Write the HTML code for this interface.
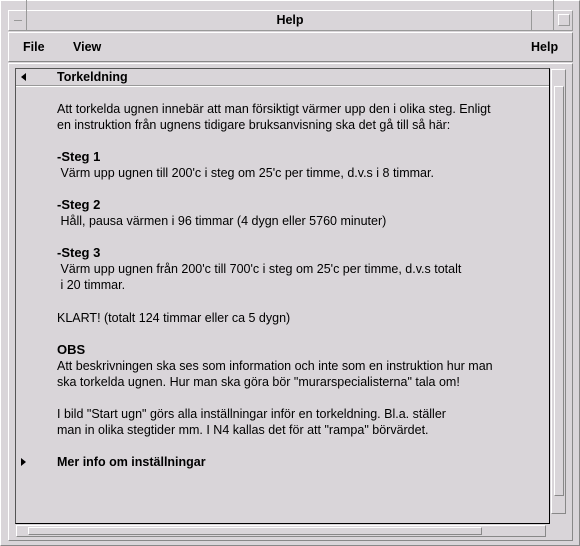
<!DOCTYPE html>
<html><head><meta charset="utf-8"><style>
*{margin:0;padding:0;box-sizing:border-box}
body{width:580px;height:546px;background:#d9d5d9;font-family:"Liberation Sans",Arial,sans-serif;font-size:12px;color:#000;position:relative;overflow:hidden}
.a{position:absolute}
.t{position:absolute;left:57px;white-space:pre;line-height:14px;font-size:12.5px}
.h{font-size:13px;font-weight:bold}
b{font-weight:bold}
</style></head><body>
<div class="a" style="left:0;top:0;width:580px;height:546px;border:1px solid #fff;border-right-color:#888;border-bottom-color:#888"></div>
<div class="a" style="left:8px;top:10px;width:565px;height:21px;border:1px solid #fff;border-right-color:#999;border-bottom-color:#999"></div>
<div class="a" style="left:26px;top:0;width:1px;height:10px;background:#999"></div>
<div class="a" style="left:553px;top:0;width:1px;height:10px;background:#999"></div>
<div class="a" style="left:26px;top:10px;width:1px;height:21px;background:#999"></div>
<div class="a" style="left:531px;top:10px;width:1px;height:21px;background:#999"></div>
<div class="a" style="left:553px;top:10px;width:1px;height:21px;background:#999"></div>
<div class="a" style="left:14px;top:20px;width:8px;height:1px;background:#999"></div>
<div class="a" style="left:558px;top:14px;width:12px;height:12px;border:1px solid #999;border-top-color:#fff;border-left-color:#fff"></div>
<div class="a" style="left:0;top:13px;width:580px;text-align:center;font-weight:bold;font-size:12.5px">Help</div>
<div class="a" style="left:8px;top:32px;width:565px;height:30px;border:1px solid #fff;border-right-color:#888;border-bottom-color:#888"></div>
<div class="a" style="left:23px;top:40px;font-weight:bold;font-size:12.5px">File</div>
<div class="a" style="left:73px;top:40px;font-weight:bold;font-size:12.5px">View</div>
<div class="a" style="left:531px;top:40px;font-weight:bold;font-size:12.5px">Help</div>
<div class="a" style="left:8px;top:63px;width:565px;height:478px;border:1px solid #fff;border-right-color:#888;border-bottom-color:#888"></div>
<div class="a" style="left:15px;top:68px;width:535px;height:456px;border:1px solid #000;border-top-color:#555;border-left-color:#555"></div>
<div class="a" style="left:16px;top:85px;width:533px;height:1px;background:#999"></div>
<div class="a" style="left:16px;top:86px;width:533px;height:1px;background:#fff"></div>
<div class="a" style="left:21px;top:73px;width:0;height:0;border-top:4px solid transparent;border-bottom:4px solid transparent;border-right:5px solid #000"></div>
<div class="a" style="left:21px;top:458px;width:0;height:0;border-top:4px solid transparent;border-bottom:4px solid transparent;border-left:5px solid #000"></div>
<div class="a" style="left:551px;top:69px;width:15px;height:445px;border:1px solid #fff;border-right-color:#888;border-bottom-color:#888"></div>
<div class="a" style="left:554px;top:86px;width:10px;height:410px;border:1px solid #fff;border-right-color:#888;border-bottom-color:#888"></div>
<div class="a" style="left:16px;top:525px;width:530px;height:12px;border:1px solid #fff;border-right-color:#888;border-bottom-color:#888"></div>
<div class="a" style="left:28px;top:527px;width:454px;height:8px;border:1px solid #fff;border-right-color:#888;border-bottom-color:#888"></div>
<div class="t" style="top:70px"><b>Torkeldning</b></div>
<div class="t" style="top:102px">Att torkelda ugnen innebär att man försiktigt värmer upp den i olika steg. Enligt</div>
<div class="t" style="top:118px">en instruktion från ugnens tidigare bruksanvisning ska det gå till så här:</div>
<div class="t h" style="top:150px">-Steg 1</div>
<div class="t" style="top:166px"> Värm upp ugnen till 200'c i steg om 25'c per timme, d.v.s i 8 timmar.</div>
<div class="t h" style="top:198px">-Steg 2</div>
<div class="t" style="top:214px"> Håll, pausa värmen i 96 timmar (4 dygn eller 5760 minuter)</div>
<div class="t h" style="top:246px">-Steg 3</div>
<div class="t" style="top:262px"> Värm upp ugnen från 200'c till 700'c i steg om 25'c per timme, d.v.s totalt</div>
<div class="t" style="top:278px"> i 20 timmar.</div>
<div class="t" style="top:311px">KLART! (totalt 124 timmar eller ca 5 dygn)</div>
<div class="t h" style="top:343px">OBS</div>
<div class="t" style="top:359px">Att beskrivningen ska ses som information och inte som en instruktion hur man</div>
<div class="t" style="top:375px">ska torkelda ugnen. Hur man ska göra bör "murarspecialisterna" tala om!</div>
<div class="t" style="top:407px">I bild "Start ugn" görs alla inställningar inför en torkeldning. Bl.a. ställer</div>
<div class="t" style="top:423px">man in olika stegtider mm. I N4 kallas det för att "rampa" börvärdet.</div>
<div class="t" style="top:455px"><b>Mer info om inställningar</b></div>
</body></html>
